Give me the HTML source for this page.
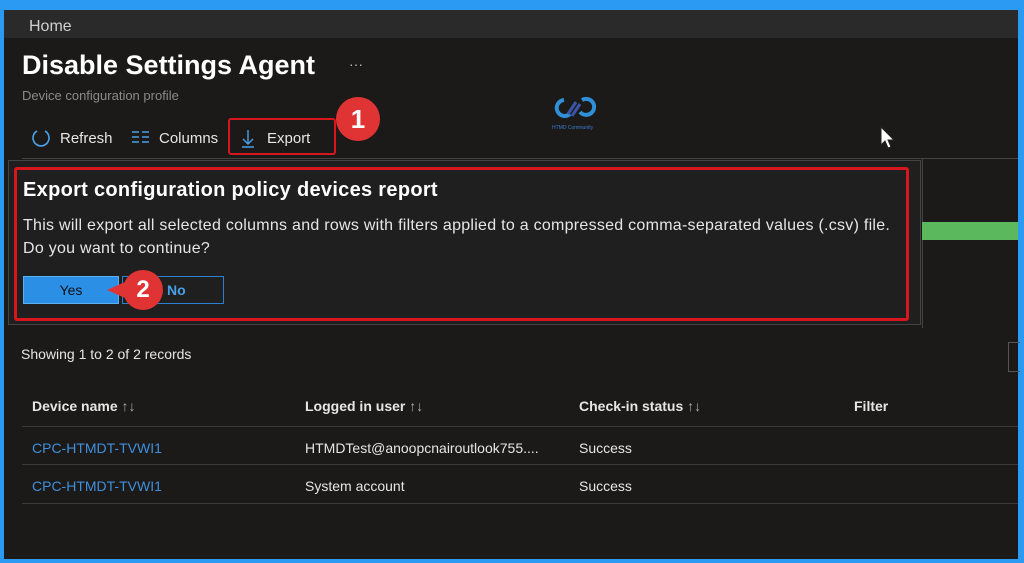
<!DOCTYPE html>
<html><head><meta charset="utf-8"><style>
*{margin:0;padding:0;box-sizing:border-box}
body{width:1024px;height:563px;background:#2b9af3;font-family:"Liberation Sans",sans-serif;position:relative;overflow:hidden}
.main{position:absolute;left:4px;top:10px;width:1014px;height:549px;background:#1b1a19}
.abs{position:absolute;white-space:nowrap}
.home{position:absolute;left:0;top:0;width:1014px;height:28px;background:#2a2a2a}
</style></head><body>
<div class="main">
<div class="home"></div>
<div class="abs" style="left:25px;top:8px;color:#d0d0d0;font-size:16px">Home</div>
<div class="abs" style="left:18px;top:40px;color:#fff;font-size:27px;font-weight:bold">Disable Settings Agent</div>
<div class="abs" style="left:345px;top:46px;color:#bbb;font-size:14px">···</div>
<div class="abs" style="left:18px;top:78px;color:#8a8a8a;font-size:13px">Device configuration profile</div>
<!-- logo -->
<svg class="abs" style="left:546px;top:86px" width="50" height="36"><path d="M14 4a8 8 0 1 0 6 14M30 16a8 8 0 1 0 2-12" stroke="#2f8fd8" stroke-width="4" fill="none"/><path d="M18 18l8-12M22 20l8-12" stroke="#3a55a8" stroke-width="3"/><text x="2" y="33" font-size="5" fill="#3c7bd0" font-family="Liberation Sans">HTMD Community</text></svg>
<!-- toolbar -->
<svg class="abs" style="left:26px;top:117px" width="22" height="22"><path d="M7 4a8 8 0 1 0 8 0" stroke="#4aa0e6" stroke-width="1.6" fill="none"/></svg>
<div class="abs" style="left:56px;top:120px;color:#e6e6e6;font-size:15px">Refresh</div>
<svg class="abs" style="left:127px;top:120px" width="20" height="14"><path d="M1 2h7M1 7h7M1 12h7M11 2h7M11 7h7M11 12h7" stroke="#4aa0e6" stroke-width="1.4"/></svg>
<div class="abs" style="left:155px;top:120px;color:#e6e6e6;font-size:15px">Columns</div>
<svg class="abs" style="left:236px;top:118px" width="16" height="20"><path d="M8 2v14M3 11l5 5 5-5M2 19h12" stroke="#4aa0e6" stroke-width="1.4" fill="none"/></svg>
<div class="abs" style="left:263px;top:120px;color:#e6e6e6;font-size:15px">Export</div>
<div class="abs" style="left:224px;top:108px;width:108px;height:37px;border:2px solid #d8161e;border-radius:3px"></div>
<div class="abs" style="left:332px;top:87px;width:44px;height:44px;border-radius:50%;background:#e03434;color:#fff;font-size:26px;font-weight:bold;text-align:center;line-height:44px">1</div>
<div class="abs" style="left:18px;top:148px;width:996px;height:1px;background:#444"></div>
<div class="abs" style="left:918px;top:148px;width:1px;height:170px;background:#444"></div>
<div class="abs" style="left:918px;top:212px;width:96px;height:18px;background:#5cb85c"></div>
<!-- dialog -->
<div class="abs" style="left:4px;top:150px;width:913px;height:165px;background:#1f1f1f;border:1px solid #444"></div>
<div class="abs" style="left:10px;top:157px;width:895px;height:154px;border:3px solid #d8161e;border-radius:3px"></div>
<div class="abs" style="left:19px;top:169px;color:#fff;font-size:20px;font-weight:bold;letter-spacing:0.3px">Export configuration policy devices report</div>
<div class="abs" style="left:19px;top:204px;color:#e6e6e6;font-size:16px;letter-spacing:0.27px;line-height:23px">This will export all selected columns and rows with filters applied to a compressed comma-separated values (.csv) file.<br>Do you want to continue?</div>
<div class="abs" style="left:19px;top:266px;width:96px;height:28px;background:#2b8fe6;border:1px solid #5aaff0;color:#111;font-size:14px;text-align:center;line-height:26px">Yes</div>
<div class="abs" style="left:118px;top:266px;width:102px;height:28px;border:1px solid #2b7fd0;color:#4aa0e6;font-size:14px;font-weight:bold;line-height:26px;padding-left:44px">No</div>
<div class="abs" style="left:119px;top:260px;width:40px;height:40px;border-radius:50%;background:#e03434;color:#fff;font-size:24px;font-weight:bold;text-align:center;line-height:40px">2</div>
<div class="abs" style="left:103px;top:272px;width:0;height:0;border-top:8px solid transparent;border-bottom:8px solid transparent;border-right:18px solid #e03434"></div>
<!-- table -->
<div class="abs" style="left:17px;top:336px;color:#e6e6e6;font-size:14px">Showing 1 to 2 of 2 records</div>
<div class="abs" style="left:1004px;top:332px;width:12px;height:30px;border:1px solid #555;border-right:none"></div>
<div class="abs" style="left:28px;top:388px;color:#e6e6e6;font-size:14px;font-weight:bold">Device name <span style="font-weight:normal;color:#aaa">↑↓</span></div>
<div class="abs" style="left:301px;top:388px;color:#e6e6e6;font-size:14px;font-weight:bold">Logged in user <span style="font-weight:normal;color:#aaa">↑↓</span></div>
<div class="abs" style="left:575px;top:388px;color:#e6e6e6;font-size:14px;font-weight:bold">Check-in status <span style="font-weight:normal;color:#aaa">↑↓</span></div>
<div class="abs" style="left:850px;top:388px;color:#e6e6e6;font-size:14px;font-weight:bold">Filter</div>
<div class="abs" style="left:18px;top:416px;width:996px;height:1px;background:#3a3a3a"></div>
<div class="abs" style="left:28px;top:430px;color:#3f8fdc;font-size:14px">CPC-HTMDT-TVWI1</div>
<div class="abs" style="left:301px;top:430px;color:#e6e6e6;font-size:14px">HTMDTest@anoopcnairoutlook755....</div>
<div class="abs" style="left:575px;top:430px;color:#e6e6e6;font-size:14px">Success</div>
<div class="abs" style="left:18px;top:454px;width:996px;height:1px;background:#3a3a3a"></div>
<div class="abs" style="left:28px;top:468px;color:#3f8fdc;font-size:14px">CPC-HTMDT-TVWI1</div>
<div class="abs" style="left:301px;top:468px;color:#e6e6e6;font-size:14px">System account</div>
<div class="abs" style="left:575px;top:468px;color:#e6e6e6;font-size:14px">Success</div>
<div class="abs" style="left:18px;top:493px;width:996px;height:1px;background:#3a3a3a"></div>
<!-- cursor -->
<svg class="abs" style="left:876px;top:116px" width="16" height="24"><path d="M1 1v18l4-4 3 7 3-1-3-7h6z" fill="#fff" stroke="#222" stroke-width="1"/></svg>
</div>
</body></html>
